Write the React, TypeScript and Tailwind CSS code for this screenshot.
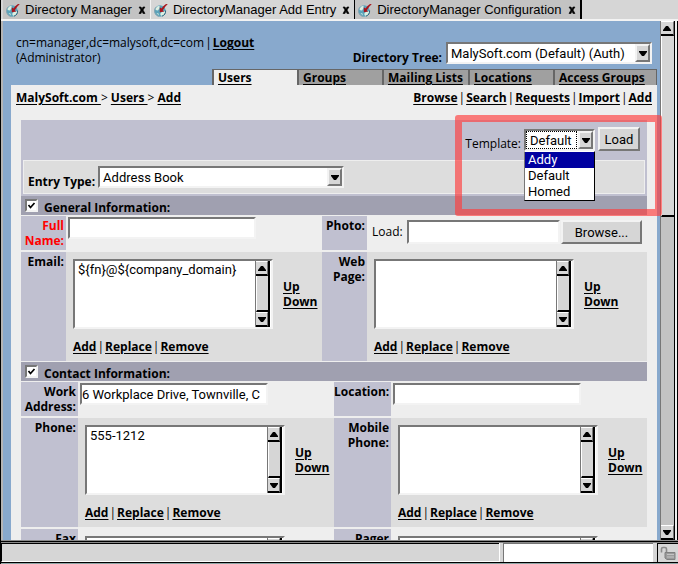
import React from "react";

const SUNKEN = "border-2 border-t-[#777] border-l-[#777] border-b-[#f3f3f3] border-r-[#f3f3f3] bg-white";
const RAISED = "border-2 border-t-[#f3f3f3] border-l-[#f3f3f3] border-b-[#777] border-r-[#777] bg-[#d6d6d6]";
const FIELD = "font-['Roboto',sans-serif] text-[13px] font-normal text-black";
const LINK = "font-bold underline underline-offset-2";

function Globe() {
  return (
    <svg width="14" height="14" viewBox="0 0 14 14" className="shrink-0" aria-hidden="true">
      <circle cx="6" cy="8" r="5.700" fill="#5ba3bb" />
      <path d="M1.500 5.500Q3 3 5.500 2.800L5.600 5 4 7.500 1.600 7zM7 9.500l3.500-1.500.6 1.500L9.300 12.400 7 12.800 6.200 11zM2.500 10l2 .5.3 2z" fill="#dcefe2" />
      <path d="M2 4.200A5.600 5.600 0 0 0 5 13.400" fill="none" stroke="#86a3b0" strokeWidth="1" />
      <path d="M8 13.200A5.600 5.600 0 0 0 11.600 7.500" fill="none" stroke="#2b647d" strokeWidth="1" />
      <path d="M5.800 4.300v5l4.400-.9-1.400-1.200L11.800 3 13.800 1.200 12 1 9.200 3.200 7.500 5.600z" fill="#a8141c" />
    </svg>
  );
}

function Triangle({ up = false }: { up?: boolean }) {
  return (
    <svg width="8" height="5" viewBox="0 0 8 5" aria-hidden="true">
      <path d={up ? "M0 5V4L3 0H5L8 4V5z" : "M0 0V1L3 5H5L8 1V0z"} fill="#000" />
    </svg>
  );
}

function WindowTab({ title, className }: { title: string; className: string }) {
  return (
    <div className={`flex h-[19px] items-center px-[3px] ${className}`}>
      <Globe />
      <button className="ml-[5px] whitespace-nowrap leading-[16px]">{title}</button>
      <button aria-label={`Close ${title}`} className="ml-[5px] flex h-4 items-center px-px">
        <svg width="8" height="8" viewBox="0 0 8 8" aria-hidden="true">
          <path d="M1 1h2l1 2 1-2h2L5 4l2 3.500H5L4 5 3 7.500H1L3 4z" fill="#000" stroke="#000" strokeWidth=".6" />
        </svg>
      </button>
    </div>
  );
}

function SectionTab({ title, className }: { title: string; className: string }) {
  return (
    <a href="#" className={`h-4 border-l-2 border-t border-[#666] pl-1 leading-[16px] ${LINK} ${className}`}>
      {title}
    </a>
  );
}

function DropDown({ id, options, className, dotted = false }: { id: string; options: string[]; className: string; dotted?: boolean }) {
  return (
    <div className={`relative flex h-[22px] ${SUNKEN} ${className}`}>
      <select
        id={id}
        className={`min-w-0 flex-1 appearance-none pl-[3px] leading-[17px] outline-none ${FIELD} ${dotted ? "mr-4 border border-dotted border-black" : ""}`}
      >
        {options.map((o) => (
          <option key={o}>{o}</option>
        ))}
      </select>
      <span className={`pointer-events-none absolute inset-y-0 right-0 flex w-[15px] items-center justify-center ${RAISED}`}>
        <Triangle />
      </span>
    </div>
  );
}

function ScrollButton({ up = false }: { up?: boolean }) {
  return (
    <span className="flex h-[15px] shrink-0 items-center justify-center border-b-2 border-r border-t border-b-black border-r-[#777] border-t-white bg-[#d6d6d6]">
      <Triangle up={up} />
    </span>
  );
}

function Sep() {
  return <span className="px-px">|</span>;
}

function ListField({ id, items = [] }: { id: string; items?: string[] }) {
  return (
    <div className="min-w-0 pl-[7px] pt-[7px]">
      <div className="flex gap-[10px]">
        <div className={`flex h-[70px] w-[200px] shrink-0 pr-px ${SUNKEN}`}>
          <select id={id} size={4} className={`min-w-0 flex-1 appearance-none overflow-hidden pl-px pt-px outline-none ${FIELD}`}>
            {items.map((i) => (
              <option key={i} className="min-h-0 px-[2px] py-0 leading-[17px]">
                {i}
              </option>
            ))}
          </select>
          <div className="flex w-[15px] flex-col border-l border-r-2 border-l-[#777] border-r-black bg-[#d6d6d6]">
            <ScrollButton up />
            <span className="flex-1 border-b-2 border-l border-b-black border-l-white" />
            <ScrollButton />
          </div>
        </div>
        <div className="flex flex-col items-start pt-5">
          <a href="#" className={LINK}>Up</a>
          <a href="#" className={LINK}>Down</a>
        </div>
      </div>
      <div className="mt-[10px] flex whitespace-nowrap">
        <a href="#" className={LINK}>Add</a><Sep />
        <a href="#" className={LINK}>Replace</a><Sep />
        <a href="#" className={LINK}>Remove</a>
      </div>
    </div>
  );
}

function Label({ htmlFor, children, required = false }: { htmlFor: string; children: React.ReactNode; required?: boolean }) {
  return (
    <label htmlFor={htmlFor} className={`bg-[#c0c0d0] pr-[2px] pt-[2px] text-right font-bold ${required ? "text-[#f00]" : ""}`}>
      {children}
    </label>
  );
}

function SectionHeader({ id, title }: { id: string; title: string }) {
  return (
    <div className="flex h-[19px] items-center bg-[#a0a0b0] pl-1">
      <span className="relative flex">
        <input
          id={id}
          type="checkbox"
          defaultChecked
          className={`peer size-[13px] appearance-none ${SUNKEN}`}
        />
        <svg width="13" height="13" viewBox="0 0 13 13" className="pointer-events-none absolute inset-0 hidden peer-checked:block" aria-hidden="true">
          <path d="M3.500 6l2 2.500L9.500 4" fill="none" stroke="#000" strokeWidth="1.700" />
        </svg>
      </span>
      <label htmlFor={id} className="pl-[6px] pt-[3px] font-bold">{title}</label>
    </div>
  );
}

export default function App() {
  return (
    <div className="flex h-screen flex-col overflow-hidden border-l border-black bg-[#d6d6d6] font-['Open_Sans',sans-serif] text-[12px] leading-[15px] text-black">
      <div className="flex border-b-2 border-b-[#f3f3f3] pl-[2px] font-['Liberation_Sans',sans-serif] text-[13px]">
        <WindowTab title="Directory Manager" className="border-r border-r-[#f3f3f3] bg-[#c3c3c3]" />
        <WindowTab title="DirectoryManager Add Entry" className="border-r border-r-black bg-[#d6d6d6]" />
        <WindowTab title="DirectoryManager Configuration" className="border-r-2 border-r-black bg-[#c3c3c3]" />
      </div>

      <div className="flex min-h-0 flex-1 border-l-2 border-l-[#b5b5b5]">
        <div className="flex min-w-0 flex-1 flex-col bg-[#88a9cd] pl-2 pr-[3px]">
          <header className="flex h-12 shrink-0 justify-between pl-[5px] pr-[5px]">
            <div className="pt-[14px]">
              <span>cn=manager,dc=malysoft,dc=com</span>
              <Sep />
              <a href="#" className={LINK}>Logout</a>
              <br />
              (Administrator)
            </div>
            <div className="flex items-start gap-1 pt-[21px]">
              <label htmlFor="tree" className="pt-2 font-bold">Directory Tree:</label>
              <DropDown id="tree" options={["MalySoft.com (Default) (Auth)"]} className="w-[206px]" />
            </div>
          </header>

          <nav className="flex shrink-0 justify-end">
            <SectionTab title="Users" className="w-[85px] bg-[#eee]" />
            <SectionTab title="Groups" className="w-[85px] bg-[#a0a0a0]" />
            <SectionTab title="Mailing Lists" className="w-[86px] bg-[#a0a0a0]" />
            <SectionTab title="Locations" className="w-[85px] bg-[#a0a0a0]" />
            <SectionTab title="Access Groups" className="w-[104px] border-r bg-[#a0a0a0]" />
          </nav>

          <main className="min-h-0 flex-1 bg-[#eee]">
            <div className="flex h-[35px] justify-between px-[5px] pt-[5px]">
              <div>
                <a href="#" className={LINK}>MalySoft.com </a> &gt; <a href="#" className={LINK}>Users </a> &gt;{" "}
                <a href="#" className={LINK}>Add</a>
              </div>
              <div className="flex">
                <a href="#" className={LINK}>Browse</a><Sep />
                <a href="#" className={LINK}>Search</a><Sep />
                <a href="#" className={LINK}>Requests</a><Sep />
                <a href="#" className={LINK}>Import</a><Sep />
                <a href="#" className={LINK}>Add</a>
              </div>
            </div>

            <form className="px-[10px]">
              <div className="relative bg-[#c0c0d0] px-[2px] pb-[2px]">
                <div className="flex h-10 items-start justify-end gap-[3px] pr-[5px] pt-[7px]">
                  <label htmlFor="template" className="pt-[9px]">Template:</label>
                  <div className="relative pt-[2px]">
                    <DropDown id="template" options={["Default", "Addy", "Homed"]} className="w-[71px]" dotted />
                    <ul
                      role="listbox"
                      aria-label="Template"
                      className={`absolute left-0 top-[24px] z-10 w-[71px] border border-b-black border-l-[#777] border-r-black border-t-white bg-white leading-[16px] ${FIELD}`}
                    >
                      <li role="option" aria-selected="true" className="bg-[#0000a0] pl-[3px] text-white">Addy</li>
                      <li role="option" aria-selected="false" className="pl-[3px]">Default</li>
                      <li role="option" aria-selected="false" className="pl-[3px]">Homed</li>
                    </ul>
                  </div>
                  <button type="button" className={`h-6 w-[42px] ${RAISED} ${FIELD}`}>Load</button>
                </div>
                <div className="flex h-[34px] gap-[3px] border border-[#eee] bg-[#ddd] pl-1 pt-[5px]">
                  <label htmlFor="entry-type" className="pt-[8px] font-bold">Entry Type:</label>
                  <DropDown id="entry-type" options={["Address Book"]} className="w-[246px]" />
                </div>
                <div className="pointer-events-none absolute -right-[15px] -top-[5px] z-20 h-[101px] w-[207px] rounded-[3px] border-[7px] border-[rgba(255,60,60,0.65)]" />
              </div>

              <SectionHeader id="general" title="General Information:" />
              <div className="mt-px grid grid-cols-[45px_256fr_45px_280fr] gap-y-[2px]">
                <Label htmlFor="full-name" required>Full Name:</Label>
                <div className="h-[34px] min-w-0 pl-[2px] pt-px">
                  <input id="full-name" className={`h-[22px] w-[188px] ${SUNKEN} ${FIELD}`} />
                </div>
                <Label htmlFor="photo">Photo:</Label>
                <div className="flex min-w-0 items-start pl-[5px] pt-1">
                  <label htmlFor="photo" className="w-[35px] pt-[4px] leading-[16px]">Load:</label>
                  <input id="photo" className={`h-6 w-[153px] ${SUNKEN} ${FIELD}`} />
                  <button type="button" className={`ml-px h-6 w-[81px] ${RAISED} ${FIELD}`}>Browse...</button>
                </div>
              </div>
              <div className="mt-[2px] grid h-[109px] grid-cols-[45px_256fr_45px_280fr] bg-[#ddd]">
                <Label htmlFor="email">Email:</Label>
                <ListField id="email" items={["${fn}@${company_domain}"]} />
                <Label htmlFor="web">Web Page:</Label>
                <ListField id="web" />
              </div>

              <div className="mt-px">
                <SectionHeader id="contact" title="Contact Information:" />
              </div>
              <div className="mt-px grid grid-cols-[57px_1fr_57px_1fr]">
                <Label htmlFor="work">Work Address:</Label>
                <div className="h-[34px] min-w-0 pl-[2px] pt-px">
                  <input id="work" defaultValue="6 Workplace Drive, Townville, C" className={`h-[22px] w-[188px] ${SUNKEN} ${FIELD}`} />
                </div>
                <Label htmlFor="location">Location:</Label>
                <div className="h-[34px] min-w-0 pl-[2px] pt-px">
                  <input id="location" className={`h-[22px] w-[188px] ${SUNKEN} ${FIELD}`} />
                </div>
              </div>
              <div className="mt-[2px] grid h-[109px] grid-cols-[57px_1fr_57px_1fr] bg-[#ddd]">
                <Label htmlFor="phone">Phone:</Label>
                <ListField id="phone" items={["555-1212"]} />
                <Label htmlFor="mobile">Mobile Phone:</Label>
                <ListField id="mobile" />
              </div>
              <div className="mt-[2px] grid h-[109px] grid-cols-[57px_1fr_57px_1fr]">
                <Label htmlFor="fax">Fax</Label>
                <ListField id="fax" />
                <Label htmlFor="pager">Pager</Label>
                <ListField id="pager" />
              </div>
            </form>
          </main>
        </div>

        <div className="flex w-[15px] shrink-0 flex-col border-l border-r border-l-[#777] border-r-black bg-[#c3c3c3]">
          <ScrollButton up />
          <span className="h-[181px] border-b-2 border-l border-b-black border-l-white bg-[#d6d6d6]" />
          <span className="flex-1" />
          <ScrollButton />
        </div>
        <div className="w-[3px] shrink-0 border-r border-black bg-[#eee]" />
      </div>

      <footer className="z-10 flex h-[24px] shrink-0 flex-col border-b border-t border-b-[#8fa6a6] border-t-[#8a8a8a] bg-[#d6d6d6]">
        <div className="h-[2px] border-t border-black bg-[#8a8a8a]" />
        <div className="flex flex-1 border-b border-black">
          <div className="flex-1 border-b border-l border-t border-b-white border-l-black border-t-black" />
          <div className="w-1 border-l border-white" />
          <div className="w-[150px] border-l border-t border-[#777] bg-white" />
          <div className="w-1" />
          <div className="flex w-[21px] items-center justify-center border-l border-t border-black">
            <svg width="16" height="15" viewBox="0 0 16 15" aria-hidden="true">
              <path d="M1.500 6.500V3Q1.500 1.500 3 1.500H5Q6.500 1.500 6.500 3V6" fill="none" stroke="#8a8a8a" strokeWidth="1.600" />
              <path d="M5 6.500h10v7H7L5 12z" fill="#9b9b9b" stroke="#808080" />
              <path d="M7 8.500h7M7 11h7" stroke="#c4c4c4" />
            </svg>
          </div>
        </div>
      </footer>
    </div>
  );
}
